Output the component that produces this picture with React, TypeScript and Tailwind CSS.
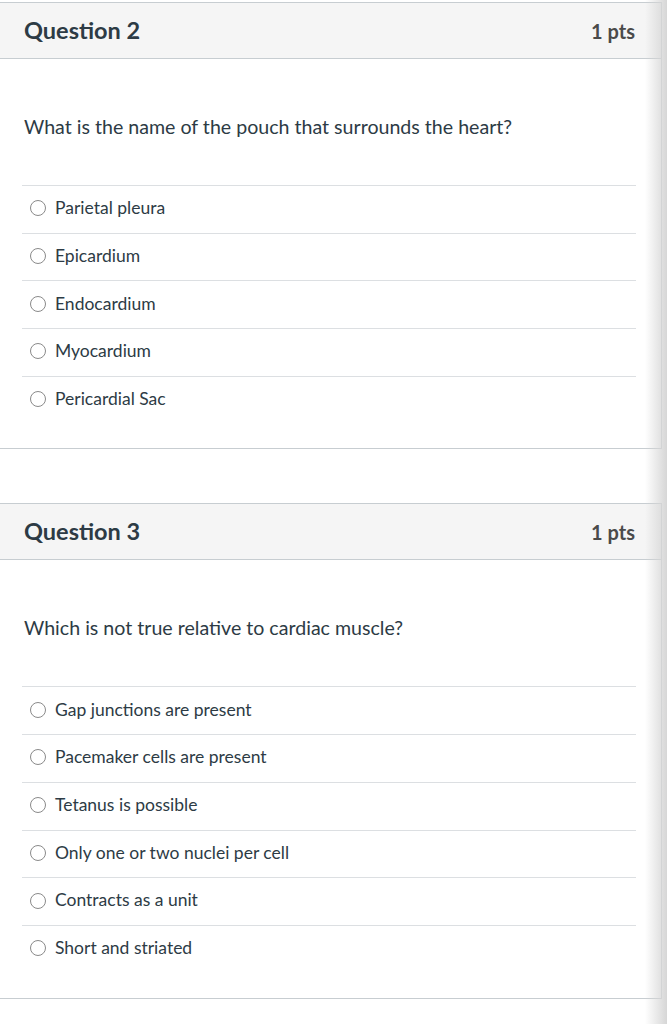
const questions = [
  {
    title: "Question 2",
    pts: "1 pts",
    text: "What is the name of the pouch that surrounds the heart?",
    answers: ["Parietal pleura", "Epicardium", "Endocardium", "Myocardium", "Pericardial Sac"],
  },
  {
    title: "Question 3",
    pts: "1 pts",
    text: "Which is not true relative to cardiac muscle?",
    answers: [
      "Gap junctions are present",
      "Pacemaker cells are present",
      "Tetanus is possible",
      "Only one or two nuclei per cell",
      "Contracts as a unit",
      "Short and striated",
    ],
  },
];

function QuestionCard({ q }: { q: (typeof questions)[number] }) {
  return (
    <div className="w-[662px] border-y border-r border-[#c7cdd1] bg-white">
      <div className="h-[56px] flex items-center justify-between pl-6 pr-[26px] bg-[#f5f5f5] border-b border-[#c7cdd1]">
        <h2 className="text-[23.5px] font-bold text-[#2d3b45]">{q.title}</h2>
        <span className="text-[20px] font-bold text-[#4a4a4a]">{q.pts}</span>
      </div>
      <div className="pl-[22px] pr-[25px] pb-[25px]">
        <p className="pl-[2px] pt-[55px] pb-[46px] text-[19.6px] leading-[25px] text-[#2d3b45]">{q.text}</p>
        <ul>
          {q.answers.map((a, i) => (
            <li key={i} className="h-[47.7px] flex items-center gap-[9px] border-t border-[#dcdfe2] pl-[8px] pb-[2px]">
              <span className="w-[16px] h-[16px] rounded-full border border-[#8a8a8a] bg-white flex-shrink-0" />
              <span className="text-[17.5px] text-[#2d3b45]">{a}</span>
            </li>
          ))}
        </ul>
      </div>
    </div>
  );
}

export default function App() {
  return (
    <div className="relative min-h-[1024px] bg-white pt-[2px] font-['Lato',sans-serif] overflow-hidden">
      <div className="flex flex-col gap-[54px]">
        {questions.map((q) => (
          <QuestionCard key={q.title} q={q} />
        ))}
      </div>
      <div className="absolute top-0 right-0 h-full w-[22px] bg-gradient-to-r from-white/0 to-[#d6d6d6] pointer-events-none" />
    </div>
  );
}
